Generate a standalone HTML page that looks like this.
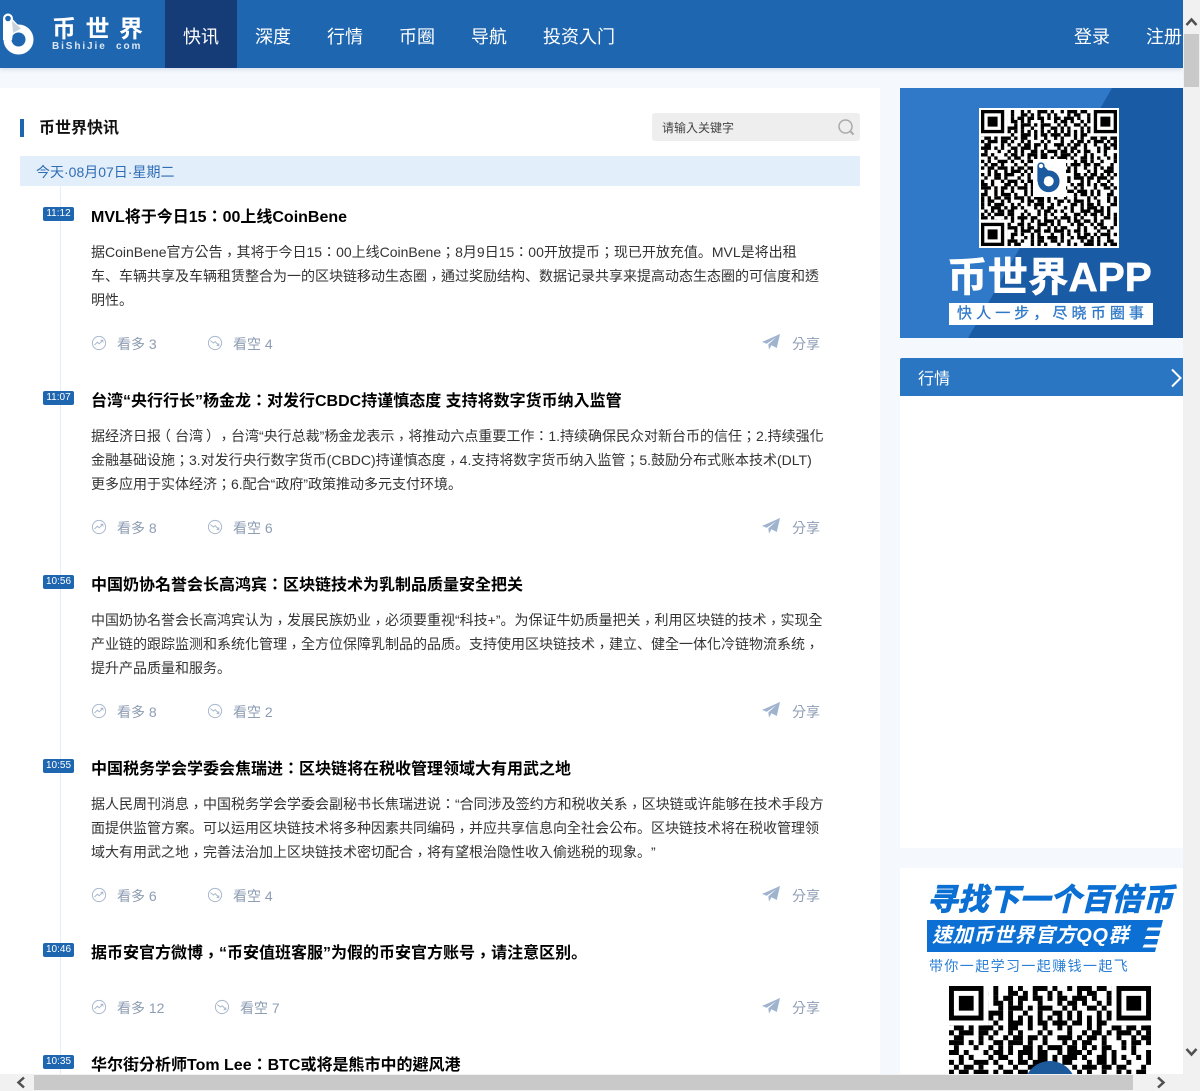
<!DOCTYPE html>
<html><head><meta charset="utf-8"><title>币世界快讯</title>
<style>
*{margin:0;padding:0;box-sizing:border-box}
html,body{width:1200px;height:1091px;overflow:hidden;background:#f5f8fc}
body{position:relative;font-family:"Liberation Sans","Noto Sans CJK TC",sans-serif;color:#333;text-spacing-trim:space-all;text-autospace:no-autospace}
em{font-style:normal;font-family:"Liberation Sans","Noto Sans CJK SC",sans-serif}
i{font-style:normal;position:relative;top:3px}
.a{position:absolute;white-space:nowrap}
#hd{left:0;top:0;width:1183px;height:68px;background:#1f66b1;box-shadow:0 2px 3px rgba(30,80,140,.12)}
.nav{top:23px;height:28px;line-height:28px;font-size:18px;color:#fff}
.tag{left:43px;width:31px;height:14px;background:#1f66b1;color:#fff;font-size:10px;line-height:14px;text-align:center;border-radius:2px}
.tt{left:91px;font-size:16px;font-weight:bold;color:#000;line-height:24px;height:24px}
.tx{left:91px;width:736px;font-size:14px;line-height:24px;color:#333;white-space:normal}
.tx div{white-space:nowrap}
.act{font-size:14px;color:#8e9db3;line-height:20px}
svg.ic{position:absolute}
</style></head><body>
<svg width="0" height="0" style="position:absolute"><defs>
<g id="up"><circle cx="8" cy="8" r="6.6" fill="none" stroke="#a9b8cb" stroke-width="1"/><path d="M3.500 10 6.400 7.200 8.200 8.800 11.600 5.400M9.600 5.200h2.200v2.200" fill="none" stroke="#a9b8cb" stroke-width="1"/></g>
<g id="dn"><circle cx="8" cy="8" r="6.6" fill="none" stroke="#a9b8cb" stroke-width="1"/><path d="M3.500 5.600 6.400 8 8.200 6.800 11.800 10.400M9.600 10.600h2.200V8.400" fill="none" stroke="#a9b8cb" stroke-width="1"/></g>
<g id="pl"><path d="M0 8 18 0 14.800 14 9.500 11.200 7 15.600 6.400 10.400 14.500 3 4.800 9.800z" fill="#9fb3cf"/></g>
<g id="qra">
<g fill="none" stroke="#000" stroke-width="1.02">
<path stroke-dasharray="1 1 2 1 1 3 1 2 1 1 1 2 3" d="M0 .5H41"/>
<path stroke-dasharray="2 1 1 1 3 1 1 2 2 1 1 1 1" d="M0 1.500H41"/>
<path stroke-dasharray="1 2 1 1 1 2 1 3 1 1 2 1 2" stroke-dashoffset="3" d="M0 2.500H41"/>
<path stroke-dasharray="3 1 1 2 1 1 2 1 1 1 1 3 1" d="M0 3.500H41"/>
<path stroke-dasharray="1 1 1 3 2 1 1 1 2 2 1 1 3" stroke-dashoffset="5" d="M0 4.500H41"/>
<path stroke-dasharray="2 2 1 1 1 1 3 1 1 2 1 2 1" d="M0 5.500H41"/>
<path stroke-dasharray="1 1 1 1 1 1 1 1 1 1 1 1 1 1 1 1 1" d="M0 6.500H41"/>
<path stroke-dasharray="1 3 1 2 1 1 1 2 3 1 1 1 2" d="M0 7.500H41"/>
<path stroke-dasharray="2 1 2 1 1 1 3 1 1 1 2 2 1" stroke-dashoffset="2" d="M0 8.500H41"/>
<path stroke-dasharray="1 1 3 1 2 1 1 2 1 1 1 3 1" d="M0 9.500H41"/>
<path stroke-dasharray="1 2 1 1 2 3 1 1 1 2 1 1 2" stroke-dashoffset="4" d="M0 10.500H41"/>
<path stroke-dasharray="3 1 1 1 1 2 2 1 3 1 1 2 1" d="M0 11.500H41"/>
<path stroke-dasharray="1 1 2 2 1 1 1 3 1 2 1 1 1" stroke-dashoffset="7" d="M0 12.500H41"/>
<path stroke-dasharray="2 1 1 3 1 1 2 1 1 1 3 1 2" d="M0 13.500H41"/>
<path stroke-dasharray="1 2 1 1 1 3 1 1 2 2 1 1 1" stroke-dashoffset="1" d="M0 14.500H41"/>
<path stroke-dasharray="1 1 1 2 3 1 1 2 1 1 2 1 3" d="M0 15.500H41"/>
<path stroke-dasharray="2 3 1 1 1 1 2 1 1 3 1 2 1" stroke-dashoffset="6" d="M0 16.500H41"/>
<path stroke-dasharray="1 1 2 1 3 1 1 1 2 1 2 1 1" d="M0 17.500H41"/>
</g>
<g fill="#fff" stroke="#000">
<path d="M0 0h8v8H0zM33 0h8v8h-8z" stroke="none"/>
<rect x=".5" y=".5" width="6" height="6" fill="none"/><rect x="34.500" y=".5" width="6" height="6" fill="none"/>
<path d="M2 2h3v3H2zM36 2h3v3h-3z" fill="#000" stroke="none"/>
</g>
</g>
<g id="qrb">
<g fill="none" stroke="#000" stroke-width="1.02">
<path stroke-dasharray="3 2 1 1 1 2 1 1 3 1 1 1 2" stroke-dashoffset="3" d="M0 18.500H41"/>
<path stroke-dasharray="1 1 1 1 2 1 3 2 1 1 1 2 1" d="M0 19.500H41"/>
<path stroke-dasharray="2 1 3 1 1 1 1 2 2 1 1 3 1" stroke-dashoffset="8" d="M0 20.500H41"/>
<path stroke-dasharray="1 2 1 2 1 1 3 1 1 1 2 1 2" d="M0 21.500H41"/>
<path stroke-dasharray="1 1 2 1 1 3 2 1 1 2 1 1 1" stroke-dashoffset="2" d="M0 22.500H41"/>
<path stroke-dasharray="3 1 1 1 2 1 1 1 3 1 2 2 1" d="M0 23.500H41"/>
<path stroke-dasharray="1 1 1 3 1 2 1 1 1 2 1 3 1" stroke-dashoffset="5" d="M0 24.500H41"/>
<path stroke-dasharray="2 2 1 1 3 1 1 2 1 1 1 1 2" d="M0 25.500H41"/>
<path stroke-dasharray="1 3 1 1 1 1 2 1 2 1 3 1 1" stroke-dashoffset="4" d="M0 26.500H41"/>
<path stroke-dasharray="1 1 2 2 1 1 1 3 1 1 2 1 2" d="M0 27.500H41"/>
<path stroke-dasharray="2 1 1 1 3 2 1 1 1 2 1 1 3" stroke-dashoffset="1" d="M0 28.500H41"/>
<path stroke-dasharray="1 2 3 1 1 1 2 1 1 3 1 1 1" d="M0 29.500H41"/>
<path stroke-dasharray="3 1 1 2 1 1 1 1 2 1 2 3 1" stroke-dashoffset="6" d="M0 30.500H41"/>
<path stroke-dasharray="1 1 1 1 3 1 2 2 1 1 1 2 1" d="M0 31.500H41"/>
<path stroke-dasharray="2 1 2 1 1 3 1 1 1 1 3 1 2" stroke-dashoffset="3" d="M0 32.500H41"/>
<path stroke-dasharray="1 3 1 1 2 1 1 2 1 2 1 1 1" d="M0 33.500H41"/>
<path stroke-dasharray="1 1 2 3 1 1 1 1 3 1 1 2 2" stroke-dashoffset="7" d="M0 34.500H41"/>
<path stroke-dasharray="2 1 1 1 1 2 3 1 1 1 2 1 1" d="M0 35.500H41"/>
<path stroke-dasharray="1 2 1 3 1 1 1 2 1 1 3 1 2" stroke-dashoffset="2" d="M0 36.500H41"/>
<path stroke-dasharray="3 1 2 1 1 1 2 1 1 2 1 1 1" d="M0 37.500H41"/>
<path stroke-dasharray="1 1 1 2 1 3 1 1 2 1 1 3 1" stroke-dashoffset="5" d="M0 38.500H41"/>
<path stroke-dasharray="2 2 1 1 1 1 3 1 1 2 1 1 2" d="M0 39.500H41"/>
<path stroke-dasharray="1 1 3 1 2 1 1 1 2 3 1 1 1" stroke-dashoffset="1" d="M0 40.500H41"/>
</g>
<g fill="#fff" stroke="#000">
<path d="M0 33h8v8H0z" stroke="none"/>
<rect x=".5" y="34.500" width="6" height="6" fill="none"/>
<path d="M2 36h3v3H2z" fill="#000" stroke="none"/>
</g>
</g>
</defs></svg>

<div class="a" id="hd"></div>
<svg class="a" style="left:2px;top:13px" width="34" height="44" viewBox="0 0 34 44"><circle cx="16.500" cy="26.500" r="11" fill="none" stroke="#fff" stroke-width="8"/><path d="M1 5.500h9L19 15l-8 5-1 7H1z" fill="#fff"/><path d="M10 8l9 7.500-8 4.500z" fill="#c9d3de"/><circle cx="6" cy="5.500" r="5" fill="#fff"/><circle cx="6" cy="5.500" r="2.800" fill="#1f66b1"/></svg>
<div class="a" style="left:52px;top:16px;font-size:24px;line-height:28px;color:#fff;letter-spacing:9.500px;font-weight:bold">币世界</div>
<div class="a" style="left:52px;top:41px;font-size:10px;line-height:12px;color:#dbe6f2;letter-spacing:1.900px;font-weight:bold">BiShiJie&nbsp;&nbsp;com</div>
<div class="a" style="left:165px;top:0;width:72px;height:68px;background:#163c78"></div>
<div class="a nav" style="left:183px">快讯</div>
<div class="a nav" style="left:255px">深度</div>
<div class="a nav" style="left:327px">行情</div>
<div class="a nav" style="left:399px">币圈</div>
<div class="a nav" style="left:471px">导航</div>
<div class="a nav" style="left:543px">投资入门</div>
<div class="a nav" style="left:1074px">登录</div>
<div class="a nav" style="left:1146px;width:37px;overflow:hidden">注册</div>

<div class="a" style="left:0;top:88px;width:880px;height:1003px;background:#fff"></div>
<div class="a" style="left:20px;top:119px;width:4px;height:18px;background:#1f66b1"></div>
<div class="a" style="left:39px;top:117px;font-size:16px;font-weight:bold;line-height:24px;color:#111">币世界快讯</div>
<div class="a" style="left:652px;top:113px;width:208px;height:28px;background:#eee;border-radius:3px"></div>
<div class="a" style="left:662px;top:119px;font-size:12px;line-height:18px;color:#444">请输入关键字</div>
<svg class="ic" style="left:837px;top:118px" width="18" height="18" viewBox="0 0 18 18"><circle cx="8.500" cy="8.500" r="6.500" fill="none" stroke="#aaa" stroke-width="1.500"/><path d="M13 13l3.500 3.500" stroke="#aaa" stroke-width="2"/></svg>
<div class="a" style="left:20px;top:156px;width:840px;height:30px;background:#e2eefa"></div>
<div class="a" style="left:36px;top:162px;font-size:14px;line-height:20px;color:#2f6db5">今天·08月07日·星期二</div>
<div class="a" style="left:60px;top:186px;width:1px;height:888px;background:#e2eefa"></div>

<div class="a tag" style="top:207px">11:12</div>
<div class="a tt" style="top:206px">MVL将于今日15：00上线CoinBene</div>
<div class="a tx" style="top:240px"><div>据CoinBene官方公告<i>，</i>其将于今日15：00上线CoinBene；8月9日15：00开放提币；现已开放充值<em>。</em>MVL是将出租</div><div>车<em>、</em>车辆共享及车辆租赁整合为一的区块链移动生态圈<i>，</i>通过奖励结构<em>、</em>数据记录共享来提高动态生态圈的可信度和透</div><div>明性<em>。</em></div></div>
<svg class="ic" style="left:91px;top:335px" width="16" height="16"><use href="#up"/></svg><div class="a act" style="left:117px;top:334px">看多 3</div>
<svg class="ic" style="left:207px;top:335px" width="16" height="16"><use href="#dn"/></svg><div class="a act" style="left:233px;top:334px">看空 4</div>
<svg class="ic" style="left:762px;top:334px" width="18" height="16"><use href="#pl"/></svg><div class="a act" style="left:792px;top:334px">分享</div>

<div class="a tag" style="top:391px">11:07</div>
<div class="a tt" style="top:390px">台湾“央行行长”杨金龙：对发行CBDC持谨慎态度 支持将数字货币纳入监管</div>
<div class="a tx" style="top:424px"><div>据经济日报<span style="position:relative;left:-4px">（</span>台湾<span style="position:relative;left:3px">）</span><i>，</i>台湾“央行总裁”杨金龙表示<i>，</i>将推动六点重要工作：1.持续确保民众对新台币的信任；2.持续强化</div><div>金融基础设施；3.对发行央行数字货币(CBDC)持谨慎态度<i>，</i>4.支持将数字货币纳入监管；5.鼓励分布式账本技术(DLT)</div><div>更多应用于实体经济；6.配合“政府”政策推动多元支付环境<em>。</em></div></div>
<svg class="ic" style="left:91px;top:519px" width="16" height="16"><use href="#up"/></svg><div class="a act" style="left:117px;top:518px">看多 8</div>
<svg class="ic" style="left:207px;top:519px" width="16" height="16"><use href="#dn"/></svg><div class="a act" style="left:233px;top:518px">看空 6</div>
<svg class="ic" style="left:762px;top:518px" width="18" height="16"><use href="#pl"/></svg><div class="a act" style="left:792px;top:518px">分享</div>

<div class="a tag" style="top:575px">10:56</div>
<div class="a tt" style="top:574px">中国奶协名誉会长高鸿宾：区块链技术为乳制品质量安全把关</div>
<div class="a tx" style="top:608px"><div>中国奶协名誉会长高鸿宾认为<i>，</i>发展民族奶业<i>，</i>必须要重视“科技+”<em>。</em>为保证牛奶质量把关<i>，</i>利用区块链的技术<i>，</i>实现全</div><div>产业链的跟踪监测和系统化管理<i>，</i>全方位保障乳制品的品质<em>。</em>支持使用区块链技术<i>，</i>建立<em>、</em>健全一体化冷链物流系统<i>，</i></div><div>提升产品质量和服务<em>。</em></div></div>
<svg class="ic" style="left:91px;top:703px" width="16" height="16"><use href="#up"/></svg><div class="a act" style="left:117px;top:702px">看多 8</div>
<svg class="ic" style="left:207px;top:703px" width="16" height="16"><use href="#dn"/></svg><div class="a act" style="left:233px;top:702px">看空 2</div>
<svg class="ic" style="left:762px;top:702px" width="18" height="16"><use href="#pl"/></svg><div class="a act" style="left:792px;top:702px">分享</div>

<div class="a tag" style="top:759px">10:55</div>
<div class="a tt" style="top:758px">中国税务学会学委会焦瑞进：区块链将在税收管理领域大有用武之地</div>
<div class="a tx" style="top:792px"><div>据人民周刊消息<i>，</i>中国税务学会学委会副秘书长焦瑞进说：“合同涉及签约方和税收关系<i>，</i>区块链或许能够在技术手段方</div><div>面提供监管方案<em>。</em>可以运用区块链技术将多种因素共同编码<i>，</i>并应共享信息向全社会公布<em>。</em>区块链技术将在税收管理领</div><div>域大有用武之地<i>，</i>完善法治加上区块链技术密切配合<i>，</i>将有望根治隐性收入偷逃税的现象<em>。</em>”</div></div>
<svg class="ic" style="left:91px;top:887px" width="16" height="16"><use href="#up"/></svg><div class="a act" style="left:117px;top:886px">看多 6</div>
<svg class="ic" style="left:207px;top:887px" width="16" height="16"><use href="#dn"/></svg><div class="a act" style="left:233px;top:886px">看空 4</div>
<svg class="ic" style="left:762px;top:886px" width="18" height="16"><use href="#pl"/></svg><div class="a act" style="left:792px;top:886px">分享</div>

<div class="a tag" style="top:943px">10:46</div>
<div class="a tt" style="top:942px">据币安官方微博<i>，</i>“币安值班客服”为假的币安官方账号<i>，</i>请注意区别<em>。</em></div>
<svg class="ic" style="left:91px;top:999px" width="16" height="16"><use href="#up"/></svg><div class="a act" style="left:117px;top:998px">看多 12</div>
<svg class="ic" style="left:214px;top:999px" width="16" height="16"><use href="#dn"/></svg><div class="a act" style="left:240px;top:998px">看空 7</div>
<svg class="ic" style="left:762px;top:998px" width="18" height="16"><use href="#pl"/></svg><div class="a act" style="left:792px;top:998px">分享</div>

<div class="a tag" style="top:1055px">10:35</div>
<div class="a tt" style="top:1052px;line-height:24px;padding-top:2px;height:22px;overflow:hidden">华尔街分析师Tom Lee：BTC或将是熊市中的避风港</div>

<!-- sidebar -->
<svg class="a" style="left:900px;top:88px" width="283" height="250"><rect width="283" height="250" fill="#2f79c8"/><path d="M212 0H283V250H68z" fill="#1a5ba5"/></svg>
<div class="a" style="left:979px;top:108px;width:140px;height:140px;background:#fff"></div>
<svg class="a" style="left:981px;top:110px" width="136" height="136" viewBox="0 0 41 41"><use href="#qra"/><use href="#qrb"/></svg>
<div class="a" style="left:1033px;top:159px;width:33px;height:38px;background:#fff"></div>
<svg class="a" style="left:1036px;top:162px" width="26" height="32" viewBox="0 0 34 44"><circle cx="16.500" cy="26.500" r="11" fill="none" stroke="#1b5a9f" stroke-width="8"/><path d="M1 5.500h9L19 15l-8 5-1 7H1z" fill="#1b5a9f"/><circle cx="6" cy="5.500" r="5" fill="#1b5a9f"/><circle cx="6" cy="5.500" r="3" fill="#fff"/></svg>
<div class="a" style="left:947px;top:254px;font-size:40.500px;line-height:46px;font-weight:bold;color:#fff;-webkit-text-stroke:.6px #fff">币世界APP</div>
<div class="a" style="left:949px;top:303px;width:204px;height:22px;background:#fff"></div>
<div class="a" style="left:957px;top:303px;font-size:15px;line-height:22px;color:#2f79c8;letter-spacing:4.100px;-webkit-text-stroke:.3px #2f79c8">快人一步<em>，</em>尽晓币圈事</div>
<div class="a" style="left:900px;top:358px;width:283px;height:490px;background:#fff"></div>
<div class="a" style="left:900px;top:358px;width:283px;height:38px;background:#2b76c2;border-radius:2px 0 0 0"></div>
<div class="a" style="left:918px;top:368px;font-size:16px;line-height:24px;color:#fff">行情</div>
<svg class="a" style="left:1170px;top:368px" width="13" height="20"><path d="M2 1.500l8.500 8.500L2 18.500" fill="none" stroke="#fff" stroke-width="2"/></svg>

<div class="a" style="left:900px;top:868px;width:283px;height:223px;background:#fff;overflow:hidden">
<div class="a" style="left:27px;top:13px;font-size:30.500px;line-height:38px;font-weight:bold;font-style:italic;color:#0b6fd3;letter-spacing:.3px;-webkit-text-stroke:1px #0b6fd3">寻找下一个百倍币</div>
<svg class="a" style="left:27px;top:52px" width="238" height="32"><path d="M0 0H236L228 32H0z" fill="#0b6fd3"/><path d="M221 7.500h14l-1.500 3h-14zM219 16h14l-1.500 3h-14zM217 24.500h14l-1.500 3h-14z" fill="#fff"/></svg>
<div class="a" style="left:32px;top:54px;font-size:20px;line-height:28px;font-weight:bold;font-style:italic;color:#fff;letter-spacing:.6px">速加币世界官方QQ群</div>
<div class="a" style="left:29px;top:88px;font-size:14px;line-height:20px;color:#2a7fd6;letter-spacing:1.400px">带你一起学习一起赚钱一起飞</div>
<svg class="a" style="left:49px;top:118px" width="202" height="88" viewBox="0 0 41 17.860"><use href="#qra"/><path d="M15.930 17.860A5.280 5.280 0 0 1 25.070 17.860z" fill="#1c5a9c"/></svg>
</div>

<!-- scrollbars -->
<div class="a" style="left:1183px;top:0;width:17px;height:1091px;background:#f1f1f1"></div>
<div class="a" style="left:1184px;top:34px;width:15px;height:53px;background:#c9c9c9"></div>
<svg class="a" style="left:1185px;top:16px" width="13" height="12"><path d="M1.500 9 6.500 3.500 11.500 9" fill="none" stroke="#505050" stroke-width="2.500"/></svg>
<svg class="a" style="left:1185px;top:1046px" width="13" height="12"><path d="M1.500 3 6.500 8.500 11.500 3" fill="none" stroke="#505050" stroke-width="2.500"/></svg>
<div class="a" style="left:0;top:1074px;width:1200px;height:17px;background:#f1f1f1"></div>
<div class="a" style="left:34px;top:1075px;width:1099px;height:15px;background:#c9c9c9"></div>
<svg class="a" style="left:15px;top:1076px" width="12" height="13"><path d="M9 1.500 3.500 6.500 9 11.500" fill="none" stroke="#505050" stroke-width="2.500"/></svg>
<svg class="a" style="left:1155px;top:1076px" width="12" height="13"><path d="M3 1.500 8.500 6.500 3 11.500" fill="none" stroke="#505050" stroke-width="2.500"/></svg>
</body></html>
